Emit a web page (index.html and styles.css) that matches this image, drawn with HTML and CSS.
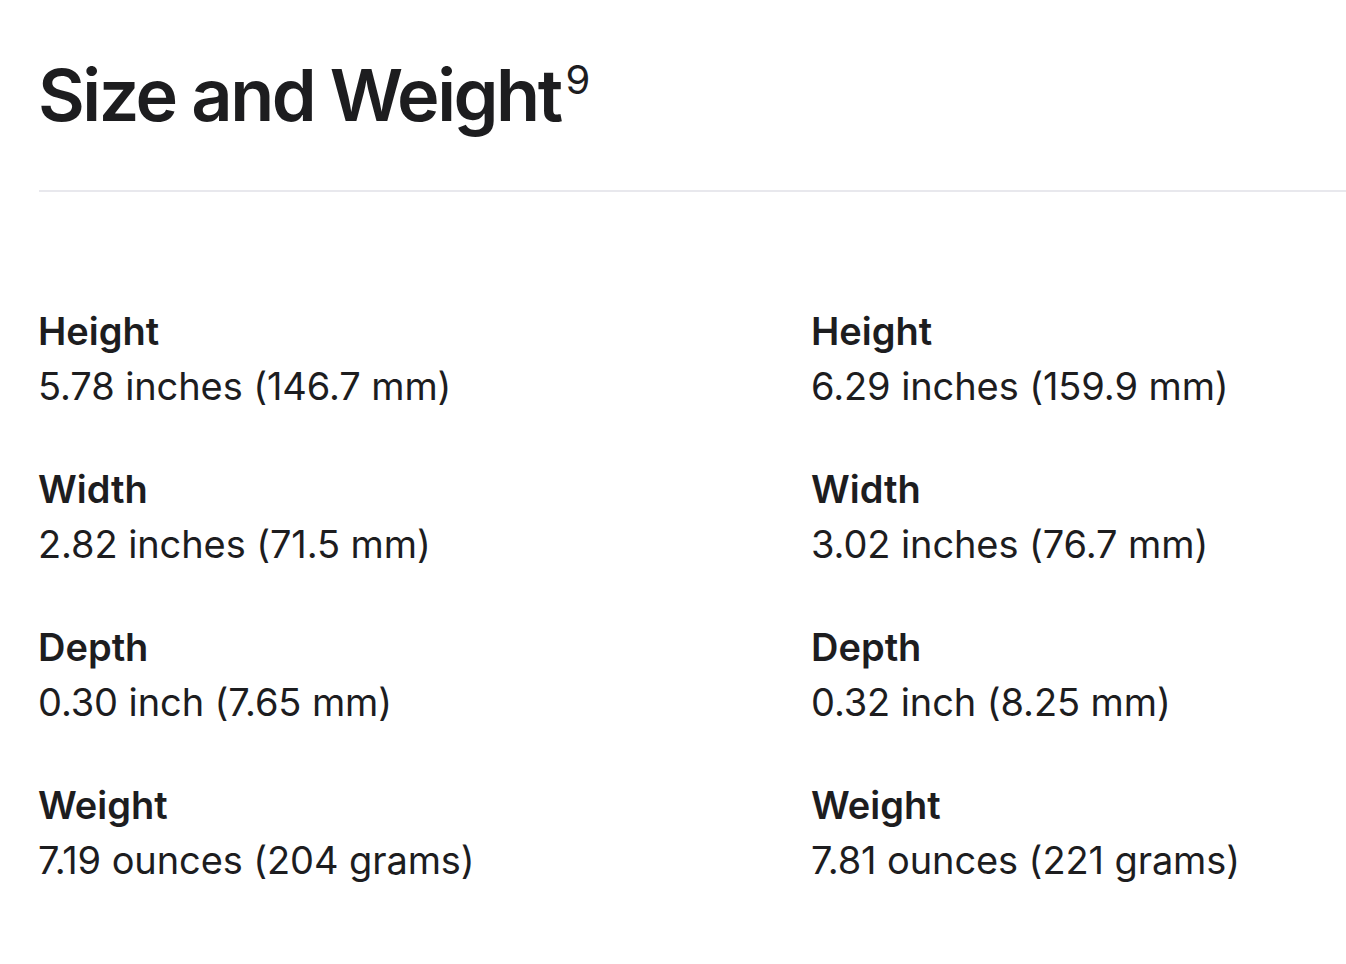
FILE: index.html
```html
<!DOCTYPE html>
<html lang="en">
<head>
<meta charset="utf-8">
<title>Size and Weight</title>
<link rel="stylesheet" href="styles.css">
</head>
<body>
<section class="section">
  <h2 class="title">Size and Weight<sup class="fn">9</sup></h2>
  <div class="rule"></div>
  <div class="columns">
    <dl class="col">
      <div class="spec"><dt>Height</dt><dd>5.78 inches (146.7 mm)</dd></div>
      <div class="spec"><dt>Width</dt><dd>2.82 inches (71.5 mm)</dd></div>
      <div class="spec"><dt>Depth</dt><dd>0.30 inch (7.65 mm)</dd></div>
      <div class="spec"><dt>Weight</dt><dd>7.19 ounces (204 grams)</dd></div>
    </dl>
    <dl class="col">
      <div class="spec"><dt>Height</dt><dd>6.29 inches (159.9 mm)</dd></div>
      <div class="spec"><dt>Width</dt><dd>3.02 inches (76.7 mm)</dd></div>
      <div class="spec"><dt>Depth</dt><dd>0.32 inch (8.25 mm)</dd></div>
      <div class="spec"><dt>Weight</dt><dd>7.81 ounces (221 grams)</dd></div>
    </dl>
  </div>
</section>
</body>
</html>
```

FILE: styles.css
```css
html, body {
  margin: 0;
  padding: 0;
  background: #ffffff;
}
body {
  font-family: Inter, "Noto Sans", sans-serif;
  color: #1d1d1f;
  overflow: hidden;
  width: 1346px;
  height: 964px;
}
.section {
  padding-left: 38px;
  padding-top: 50px;
}
.title {
  margin: 0;
  font-size: 72px;
  line-height: 90px;
  font-weight: 600;
  letter-spacing: -2.5px;
  height: 90px;
}
.fn {
  font-size: 40px;
  font-weight: 400;
  vertical-align: top;
  line-height: 60px;
  letter-spacing: 0;
  margin-left: 5px;
}
.rule {
  height: 2px;
  background: #e8e8ed;
  margin-top: 50px;
  margin-left: 1px;
}
.columns {
  display: grid;
  grid-template-columns: 773px 1fr;
  padding-top: 112px;
}
.col {
  margin: 0;
  display: flex;
  flex-direction: column;
  gap: 48px;
}
.spec {
  display: flex;
  flex-direction: column;
}
.spec dt {
  font-size: 38px;
  line-height: 55px;
  font-weight: 600;
  letter-spacing: 0;
}
.spec dd {
  margin: 0;
  font-size: 38px;
  line-height: 55px;
  font-weight: 400;
  letter-spacing: -0.1px;
}
```
